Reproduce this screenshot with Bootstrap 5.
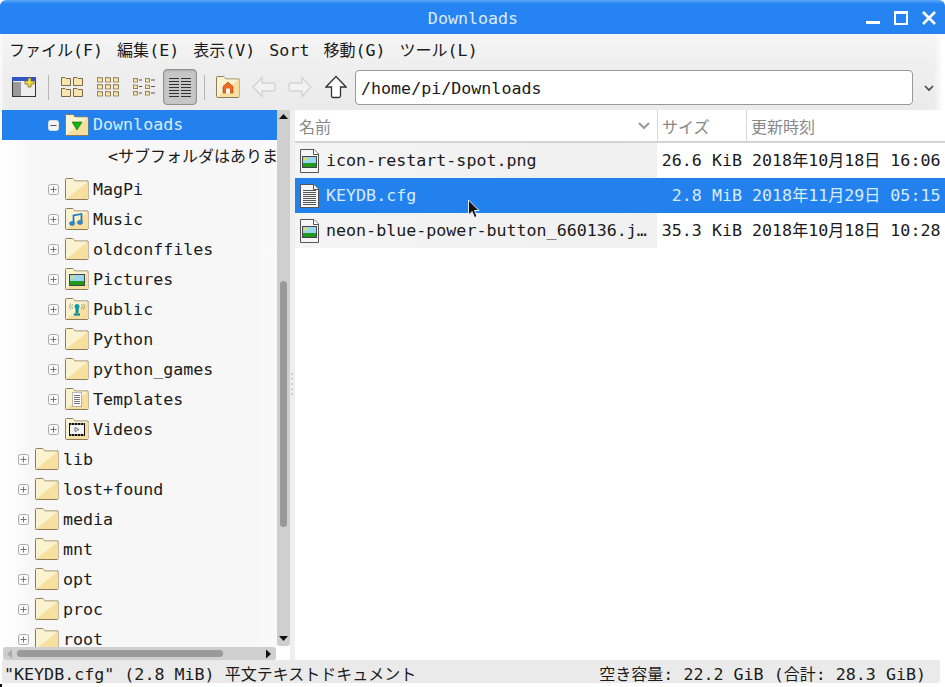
<!DOCTYPE html>
<html lang="ja"><head><meta charset="utf-8"><title>Downloads</title>
<link href="https://cdn.jsdelivr.net/npm/bootstrap@5.3.0/dist/css/bootstrap.min.css" rel="stylesheet">
<style>
html,body{margin:0;height:687px;overflow:hidden;background:#fff}
.fm-win{width:945px;height:687px;font:16.67px/1.2 "DejaVu Sans Mono","Noto Sans CJK JP",monospace;color:#1a1a1a;white-space:nowrap;position:relative;background:#fff}
.fm-win::after{content:"";position:absolute;left:0;top:684px;width:2px;height:3px;background:#111}
.cj{font-size:16px}
.fm-title{height:34px;background:linear-gradient(#5aa6f7 0,#2684f2 4px,#2583f1 100%);border-radius:6px 6px 0 0;color:#dcedff;position:relative}
.fm-title-txt{line-height:37px;padding-left:1px}
.fm-wbtns{position:absolute;right:9px;top:11px;gap:14px}
.fm-menu{height:32px;padding-left:2px;background:linear-gradient(90deg,#fbfbfb 0,transparent 4px,transparent 934px,#fff 943px),linear-gradient(#f5f5f5,#efefef)}
.fm-menu>span{padding:0 7px;line-height:34px}
.fm-tools{height:44px;padding-left:6px;background:linear-gradient(90deg,#fbfbfb 0,transparent 4px,transparent 934px,#fff 943px),linear-gradient(#efefef,#ebebeb)}
.fm-tb{width:36px;height:36px;flex:none;margin-top:3px}
.fm-tb.on{width:34px;margin:3px 1px 0;background:#c6c6c6;border:1px solid #8f8f8f;border-radius:4px;box-shadow:inset 0 1px 2px #aaa}
.fm-sep{width:12px;flex:none}
.fm-sep i{display:block;width:1px;height:25px;background:#b5b5b5;margin:9px auto 0}
.fm-path{width:558px;height:35px;margin:4px 0 0 1px;background:#fff;border:1px solid #999;border-radius:4px;line-height:35px;padding-left:5px;flex:none}
.fm-drop{width:32px;flex:none;padding-top:0}
.fm-body{height:550px}
.fm-left{width:290px;flex:none;padding-left:2px;background:#fff}
.fm-tree{width:275px;height:537px;overflow:hidden;background:linear-gradient(90deg,#fff,#f7f7f7 30px,#f7f7f7 250px,#fafafa)}
.fm-vbar{width:13px;height:536px;background:#cfcfcf;border-radius:0 0 3px 3px;align-items:center;flex:none}
.fm-vthumb{width:7px;height:246px;background:#999;border-radius:4px;margin-top:171px}
.fm-hbar{width:273px;height:13px;margin-left:1px;background:#cfcfcf;border-radius:3px;position:relative}
.fm-hthumb{width:206px;height:7px;background:#999;border-radius:4px;margin-left:14px}
.fm-row{height:30px;align-items:center;flex:none}
.fm-row.l0{padding-left:16px}.fm-row.l1{padding-left:46px}
.fm-row.hi{background:#2381ee;color:#d9ecff}
.fm-row.msg{height:34px;padding:0 0 0 106px}
.fm-exp{width:11px;height:11px;margin-right:6px;flex:none}
.fm-fold{width:24px;height:22px;margin-right:4px;flex:none;margin-top:-1px}
.fm-label{position:relative;top:1px}
.fm-row.hi .fm-label{top:0}
.fm-split{width:5px;flex:none;background:#efefef;padding-top:263px}
.fm-split i{display:block;width:2px;height:2px;background:#ccc;margin:0 0 3px 1px}
.fm-list{width:650px;flex:none;background:#fff}
.fm-head{height:33px;color:#888;border-bottom:2px solid #d4d4d4;line-height:36px}
.fm-head>div{position:relative}
.fm-c1{width:362px;padding-left:4px;flex:none}
.fm-c2{width:89px;padding-right:4px;text-align:right;flex:none}
.fm-c3{width:199px;padding-left:6px;flex:none;overflow:hidden}
.fm-head .fm-c2{text-align:left;padding:0 0 0 4px;border-left:1px solid #d8d8d8}
.fm-head .fm-c3{padding-left:4px;border-left:1px solid #d8d8d8}
.fm-sort{right:7px;top:4px}
.fm-item{height:35px;line-height:35px}
.fm-item .fm-c1{padding-left:5px;background:linear-gradient(90deg,#f4f4f4,#f0f0f0)}
.fm-item.sel{background:#2381ee;color:#d9ecff}
.fm-item.sel .fm-c1{background:none}
.fm-ficon{width:19px;height:24px;margin-right:7px;flex:none}
.fm-status{height:23px;width:938px;background:#eaeaea;line-height:29px;padding:0 14px 0 2px;margin-left:2px;border-radius:0 0 3px 3px}
.fm-cursor{position:absolute;left:467px;top:199px;width:14px;height:21px}
</style></head>
<body>
<svg width="0" height="0" class="position-absolute">
<defs>
<symbol id="fld" viewBox="0 0 24 22"><path d="M.5 20.500V1.500q0-1 1-1h6q.7 0 1.300 1l.9 1.500h13.300v17.500q0 1-1 1H1.500q-1 0-1-1z" fill="#f7e6ae" stroke="#8d7c5c"/><path d="M1 21L1 1H8L10 3.500H23Z" fill="#fbf3cf"/><path d="M1.500 21L23 4V20.500q0 .5-.5.5Z" fill="#f6df9f"/></symbol>
<symbol id="plus" viewBox="0 0 11 11"><rect x=".5" y=".5" width="10" height="10" rx="2" fill="#fafafa" stroke="#aaa"/><path d="M2.500 5.500h6M5.500 2.500v6" stroke="#777"/></symbol>
<symbol id="pic" viewBox="0 0 16 12" preserveAspectRatio="none"><rect width="16" height="12" fill="#444"/><rect x="1" y="1" width="14" height="6" fill="#9bd6ec"/><rect x="1" y="7" width="14" height="4" fill="#1f9a1f"/><circle cx="3.500" cy="3" r="1.500" fill="#f3e23c"/></symbol>
<symbol id="file" viewBox="0 0 19 24"><path d="M.5.5H14L18.500 5V23.500H.5Z" fill="#f6f6f6" stroke="#555"/><path d="M13.500 .5V5.500H18.500" fill="#fff" stroke="#555"/></symbol>
<symbol id="mini" viewBox="0 0 10 9"><path d="M.5 8.500V.5H4L5 1.500H9.500V8.500Z" fill="#f8e6ae" stroke="#7d6a42" vector-effect="non-scaling-stroke"/></symbol>
</defs></svg>

<div class="fm-win">
<div class="fm-title text-center">
 <div class="fm-title-txt">Downloads</div>
 <div class="fm-wbtns d-flex">
  <svg width="14" height="14" viewBox="0 0 14 14"><rect y="10" width="14" height="3" fill="#fff"/></svg>
  <svg width="14" height="14" viewBox="0 0 14 14"><rect x="1" y="1" width="12" height="12" fill="none" stroke="#fff" stroke-width="2"/><rect width="14" height="3" fill="#fff"/></svg>
  <svg width="14" height="14" viewBox="0 0 14 14"><path d="M1 1l12 12M13 1L1 13" stroke="#fff" stroke-width="2.600"/></svg>
 </div>
</div>
<div class="fm-menu d-flex"><span><span class="cj">ファイル</span>(F)</span><span><span class="cj">編集</span>(E)</span><span><span class="cj">表示</span>(V)</span><span>Sort</span><span><span class="cj">移動</span>(G)</span><span><span class="cj">ツール</span>(L)</span></div>
<div class="fm-tools d-flex">
 <div class="fm-tb d-flex align-items-center justify-content-center"><svg width="24" height="20" viewBox="0 0 24 20"><rect x=".5" y=".5" width="23" height="19" fill="#eee" stroke="#333"/><rect width="24" height="4" fill="#2f55c8"/><rect x="1" y="5" width="8" height="14" fill="#9a9a9a"/><path d="M16 1h3v3h3v3h-3v3h-3V7h-3V4h3z" fill="#f6e04a" stroke="#7a6a20" stroke-width=".8"/></svg></div>
 <div class="fm-sep"><i></i></div>
 <div class="fm-tb d-flex align-items-center justify-content-center"><svg width="22" height="20" viewBox="0 0 22 20"><use href="#mini" x="0" y="0" width="10" height="9"/><use href="#mini" x="12" y="0" width="10" height="9"/><use href="#mini" x="0" y="11" width="10" height="9"/><use href="#mini" x="12" y="11" width="10" height="9"/></svg></div>
 <div class="fm-tb d-flex align-items-center justify-content-center"><svg width="22" height="20" viewBox="0 0 22 20"><g id="g3"><use href="#mini" x="0" y="0" width="6" height="5.500"/><use href="#mini" x="8" y="0" width="6" height="5.500"/><use href="#mini" x="16" y="0" width="6" height="5.500"/></g><use href="#g3" y="7"/><use href="#g3" y="14"/></svg></div>
 <div class="fm-tb d-flex align-items-center justify-content-center"><svg width="22" height="18" viewBox="0 0 22 18"><g id="g4"><use href="#mini" x="0" y="0" width="5" height="4.500"/><path d="M6 2h3" stroke="#555"/><use href="#mini" x="12" y="0" width="5" height="4.500"/><path d="M18 2h4" stroke="#555"/></g><use href="#g4" y="6.500"/><use href="#g4" y="13"/></svg></div>
 <div class="fm-tb on d-flex align-items-center justify-content-center"><svg width="22" height="19" viewBox="0 0 22 19" stroke="#333"><path d="M0 .5h10M12 .5h10M0 3.500h10M12 3.500h10M0 6.500h10M12 6.500h10M0 9.500h10M12 9.500h10M0 12.500h10M12 12.500h10M0 15.500h10M12 15.500h10M0 18.500h10M12 18.500h10"/></svg></div>
 <div class="fm-sep"><i></i></div>
 <div class="fm-tb d-flex align-items-center justify-content-center"><svg width="24" height="22" viewBox="0 0 24 22"><use href="#fld" width="24" height="22"/><path d="M7 17V10.500L12 6l5 4.500V17h-3v-4h-4v4z" fill="#ee6a1e" stroke="#a8400c" stroke-width=".6"/><path d="M10 17v-4.500h4V17z" fill="#fff"/></svg></div>
 <div class="fm-tb d-flex align-items-center justify-content-center"><svg width="24" height="22" viewBox="0 0 24 22"><path d="M10 1.500L1 11l9 9.500V15h11q2 0 2-2V9q0-2-2-2H10z" fill="#f2f2f2" stroke="#d2d2d2" stroke-width="1.300"/></svg></div>
 <div class="fm-tb d-flex align-items-center justify-content-center"><svg width="24" height="22" viewBox="0 0 24 22"><path d="M14 1.500L23 11l-9 9.500V15H3q-2 0-2-2V9q0-2 2-2h11z" fill="#f2f2f2" stroke="#d2d2d2" stroke-width="1.300"/></svg></div>
 <div class="fm-tb d-flex align-items-center justify-content-center"><svg width="22" height="24" viewBox="0 0 22 24"><path d="M11 1.500L21 12h-5.500v9q0 1.500-1.500 1.500H8q-1.500 0-1.500-1.500v-9H1z" fill="#fff" stroke="#333" stroke-width="1.300"/></svg></div>
 <div class="fm-path">/home/pi/Downloads</div>
 <div class="fm-drop d-flex align-items-center justify-content-center"><svg width="10" height="7" viewBox="0 0 10 7"><path d="M1 1l4 4 4-4" fill="none" stroke="#444" stroke-width="1.600"/></svg></div>
</div>

<div class="fm-body d-flex">
 <div class="fm-left">
  <div class="d-flex">
   <div class="fm-tree d-flex flex-column">
    <div class="fm-row hi l1 d-flex"><svg class="fm-exp" viewBox="0 0 11 11"><rect x=".5" y=".5" width="10" height="10" rx="2" fill="#f4f4f4" stroke="#ddd"/><path d="M2.500 5.500h6" stroke="#555"/></svg><svg class="fm-fold" viewBox="0 0 24 22"><use href="#fld" width="24" height="22"/><path d="M7 8h10l-5 8z" fill="#12b312" stroke="#0a6a0a" stroke-width=".6"/></svg><span class="fm-label">Downloads</span></div>
    <div class="fm-row msg d-flex">&lt;<span class="cj">サブフォルダはありません</span>&gt;</div>
    <div class="fm-row l1 d-flex"><svg class="fm-exp"><use href="#plus"/></svg><svg class="fm-fold"><use href="#fld"/></svg><span class="fm-label">MagPi</span></div>
    <div class="fm-row l1 d-flex"><svg class="fm-exp"><use href="#plus"/></svg><svg class="fm-fold" viewBox="0 0 24 22"><use href="#fld" width="24" height="22"/><path d="M8.500 15V7.500l8-1.500v8" fill="none" stroke="#1a78c8" stroke-width="1.700"/><ellipse cx="7" cy="15.500" rx="2.500" ry="2" fill="#2a90e0" stroke="#164f88" stroke-width=".5"/><ellipse cx="15" cy="14.500" rx="2.500" ry="2" fill="#2a90e0" stroke="#164f88" stroke-width=".5"/></svg><span class="fm-label">Music</span></div>
    <div class="fm-row l1 d-flex"><svg class="fm-exp"><use href="#plus"/></svg><svg class="fm-fold"><use href="#fld"/></svg><span class="fm-label">oldconffiles</span></div>
    <div class="fm-row l1 d-flex"><svg class="fm-exp"><use href="#plus"/></svg><svg class="fm-fold" viewBox="0 0 24 22"><use href="#fld" width="24" height="22"/><use href="#pic" x="4" y="6" width="16" height="12"/></svg><span class="fm-label">Pictures</span></div>
    <div class="fm-row l1 d-flex"><svg class="fm-exp"><use href="#plus"/></svg><svg class="fm-fold" viewBox="0 0 24 22"><use href="#fld" width="24" height="22"/><path d="M12 10v5" stroke="#0a8f96" stroke-width="3"/><path d="M9 16.500h6" stroke="#0a8f96" stroke-width="2.200"/><circle cx="12" cy="8.500" r="2.500" fill="#0f9aa0"/><path d="M7.500 6q-1.500 2.500 0 5M16.500 6q1.500 2.500 0 5M5.500 5.500q-2 3 0 6M18.500 5.500q2 3 0 6" fill="none" stroke="#887" stroke-width=".7"/></svg><span class="fm-label">Public</span></div>
    <div class="fm-row l1 d-flex"><svg class="fm-exp"><use href="#plus"/></svg><svg class="fm-fold"><use href="#fld"/></svg><span class="fm-label">Python</span></div>
    <div class="fm-row l1 d-flex"><svg class="fm-exp"><use href="#plus"/></svg><svg class="fm-fold"><use href="#fld"/></svg><span class="fm-label">python_games</span></div>
    <div class="fm-row l1 d-flex"><svg class="fm-exp"><use href="#plus"/></svg><svg class="fm-fold" viewBox="0 0 24 22"><use href="#fld" width="24" height="22"/><rect x="7.500" y="4.500" width="9" height="14" fill="#fff" stroke="#777" stroke-dasharray="1 1"/><path d="M9 7.500h6M9 9.500h6M9 11.500h6M9 13.500h6M9 15.500h6" stroke="#777"/></svg><span class="fm-label">Templates</span></div>
    <div class="fm-row l1 d-flex"><svg class="fm-exp"><use href="#plus"/></svg><svg class="fm-fold" viewBox="0 0 24 22"><use href="#fld" width="24" height="22"/><rect x="4" y="5" width="16" height="13" fill="#111"/><rect x="5" y="7" width="14" height="9" fill="#f4f4f4"/><path d="M10 9.500l4 2-4 2z" fill="none" stroke="#555" stroke-width=".8"/><path d="M6 6h1M9 6h1M12 6h1M15 6h1M18 6h1M6 17h1M9 17h1M12 17h1M15 17h1M18 17h1" stroke="#fff"/></svg><span class="fm-label">Videos</span></div>
    <div class="fm-row l0 d-flex"><svg class="fm-exp"><use href="#plus"/></svg><svg class="fm-fold"><use href="#fld"/></svg><span class="fm-label">lib</span></div>
    <div class="fm-row l0 d-flex"><svg class="fm-exp"><use href="#plus"/></svg><svg class="fm-fold"><use href="#fld"/></svg><span class="fm-label">lost+found</span></div>
    <div class="fm-row l0 d-flex"><svg class="fm-exp"><use href="#plus"/></svg><svg class="fm-fold"><use href="#fld"/></svg><span class="fm-label">media</span></div>
    <div class="fm-row l0 d-flex"><svg class="fm-exp"><use href="#plus"/></svg><svg class="fm-fold"><use href="#fld"/></svg><span class="fm-label">mnt</span></div>
    <div class="fm-row l0 d-flex"><svg class="fm-exp"><use href="#plus"/></svg><svg class="fm-fold"><use href="#fld"/></svg><span class="fm-label">opt</span></div>
    <div class="fm-row l0 d-flex"><svg class="fm-exp"><use href="#plus"/></svg><svg class="fm-fold"><use href="#fld"/></svg><span class="fm-label">proc</span></div>
    <div class="fm-row l0 d-flex"><svg class="fm-exp"><use href="#plus"/></svg><svg class="fm-fold"><use href="#fld"/></svg><span class="fm-label">root</span></div>
   </div>
   <div class="fm-vbar d-flex flex-column">
    <svg class="position-absolute mt-1" width="9" height="6" viewBox="0 0 9 6"><path d="M4.500 0L9 5H0z" fill="#111"/></svg>
    <div class="fm-vthumb"></div>
    <svg class="mt-auto mb-1" width="9" height="6" viewBox="0 0 9 6"><path d="M4.500 5L9 0H0z" fill="#111"/></svg>
   </div>
  </div>
  <div class="fm-hbar d-flex align-items-center">
   <div class="fm-hthumb"></div>
   <svg class="position-absolute top-50 start-0 translate-middle-y ms-1" width="6" height="9" viewBox="0 0 6 9"><path d="M0 4.500L5 0V9z" fill="#aaa"/></svg>
   <svg class="position-absolute top-50 end-0 translate-middle-y me-1" width="6" height="9" viewBox="0 0 6 9"><path d="M5 4.500L0 0V9z" fill="#111"/></svg>
  </div>
 </div>
 <div class="fm-split"><i></i><i></i><i></i><i></i><i></i></div>
 <div class="fm-list">
  <div class="fm-head d-flex">
   <div class="fm-c1"><span class="cj">名前</span><svg class="position-absolute mt-2 fm-sort" width="12" height="8" viewBox="0 0 12 8"><path d="M1 1l5 5 5-5" fill="none" stroke="#999" stroke-width="2"/></svg></div>
   <div class="fm-c2"><span class="cj">サイズ</span></div>
   <div class="fm-c3"><span class="cj">更新時刻</span></div>
  </div>
  <div class="fm-item d-flex">
   <div class="fm-c1 d-flex align-items-center"><svg class="fm-ficon" viewBox="0 0 19 24"><use href="#file" width="19" height="24"/><use href="#pic" x="2" y="7" width="15" height="12"/></svg>icon-restart-spot.png</div>
   <div class="fm-c2">26.6 KiB</div><div class="fm-c3">2018<span class="cj">年</span>10<span class="cj">月</span>18<span class="cj">日</span> 16:06</div>
  </div>
  <div class="fm-item sel d-flex">
   <div class="fm-c1 d-flex align-items-center"><svg class="fm-ficon" viewBox="0 0 19 24"><use href="#file" width="19" height="24"/><path d="M3 6.500h13M3 8.500h13M3 10.500h13M3 12.500h13M3 14.500h13M3 16.500h13M3 18.500h13M3 20.500h13" stroke="#555"/></svg>KEYDB.cfg</div>
   <div class="fm-c2">2.8 MiB</div><div class="fm-c3">2018<span class="cj">年</span>11<span class="cj">月</span>29<span class="cj">日</span> 05:15</div>
  </div>
  <div class="fm-item d-flex">
   <div class="fm-c1 d-flex align-items-center"><svg class="fm-ficon" viewBox="0 0 19 24"><use href="#file" width="19" height="24"/><use href="#pic" x="2" y="7" width="15" height="12"/></svg>neon-blue-power-button_660136.j…</div>
   <div class="fm-c2">35.3 KiB</div><div class="fm-c3">2018<span class="cj">年</span>10<span class="cj">月</span>18<span class="cj">日</span> 10:28</div>
  </div>
 </div>
</div>
<div class="fm-status d-flex justify-content-between"><span>"KEYDB.cfg" (2.8 MiB) <span class="cj">平文テキストドキュメント</span></span><span><span class="cj">空き容量</span>: 22.2 GiB (<span class="cj">合計</span>: 28.3 GiB)</span></div>
<svg class="fm-cursor" viewBox="0 0 14 21"><path d="M1.500 1v15l3.500-3.500 2.500 6 2.500-1-2.500-6H12z" fill="#111" stroke="#fff" stroke-width=".9"/></svg>
</div>
</body></html>
